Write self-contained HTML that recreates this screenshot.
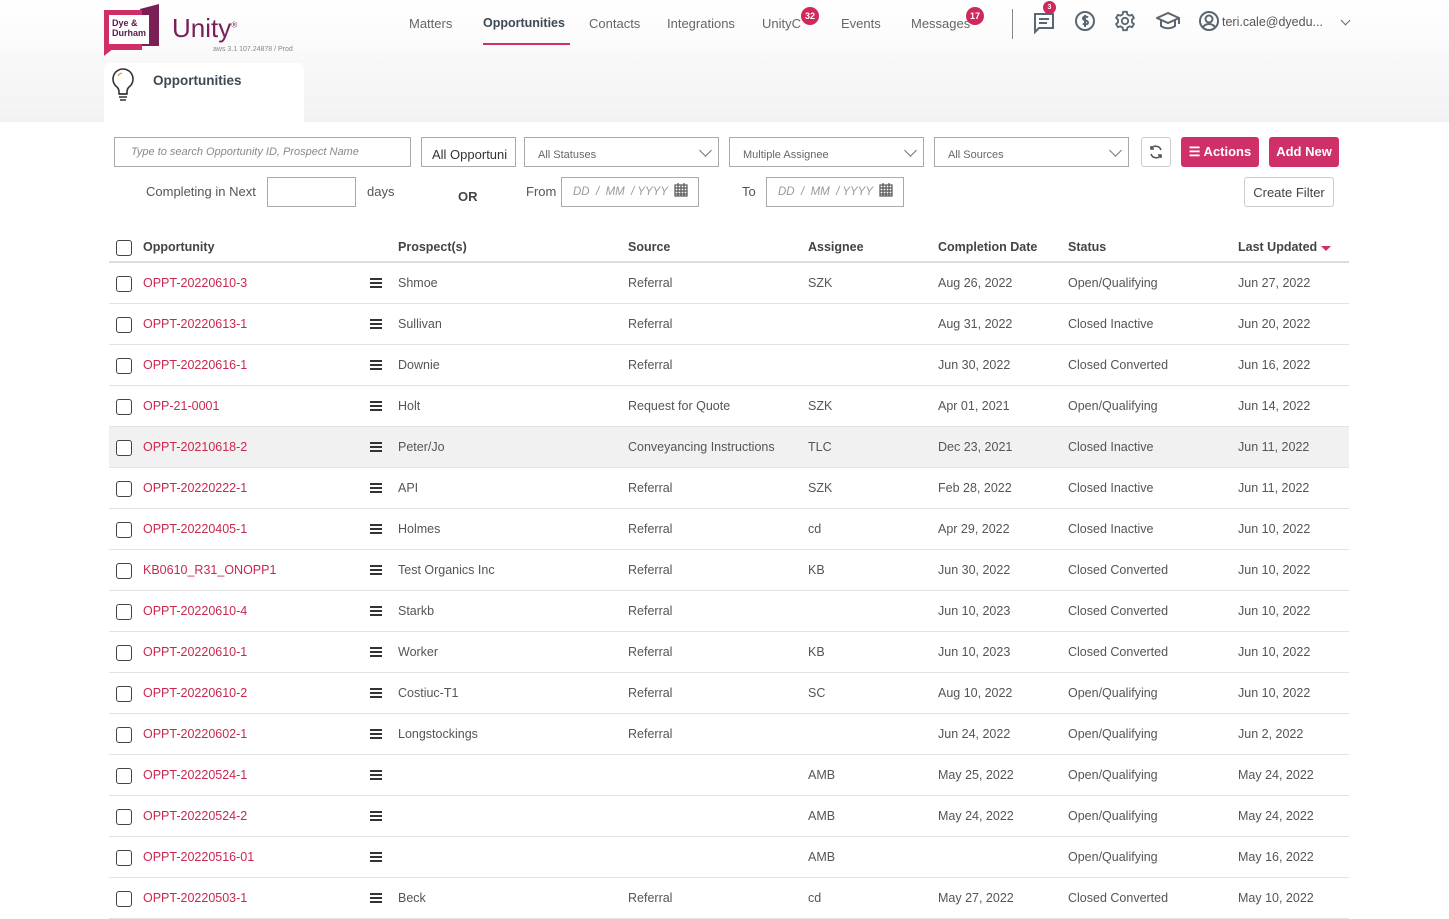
<!DOCTYPE html>
<html><head><meta charset="utf-8">
<style>
*{box-sizing:border-box;margin:0;padding:0}
body{width:1449px;height:906px;overflow:hidden;background:#fff;font-family:"Liberation Sans",sans-serif;color:#555;position:relative}
.a{position:absolute;white-space:nowrap}
.hdr{position:absolute;left:0;top:0;width:1449px;height:122px;background:linear-gradient(#fff,#f2f2f2)}
.nav{font-size:13px;color:#666;top:16px}
.badge{position:absolute;background:#d0285a;color:#fff;border-radius:50%;font-size:9px;font-weight:bold;text-align:center}
.inp{position:absolute;border:1px solid #aaa;background:#fff;height:30px}
.ph{font-size:11px;color:#888;font-style:italic}
.sel{font-size:11px;color:#666}
.chev{position:absolute;right:8px;top:8px;width:9px;height:9px;border-right:1.5px solid #777;border-bottom:1.5px solid #777;transform:rotate(45deg)}
.btn{position:absolute;background:#d0306a;color:#fff;font-weight:bold;font-size:13px;border-radius:3px;height:30px;line-height:30px;text-align:center}
.th{font-size:12.5px;font-weight:bold;color:#444;top:240px}
.cb{position:absolute;left:116px;width:16px;height:16px;border:1.5px solid #444;border-radius:3px;background:#fff}
.row{position:absolute;left:109px;width:1240px;height:41px;border-bottom:1px solid #e3e3e3;font-size:12.5px;color:#555}
.row span{position:absolute;top:13px;white-space:nowrap}
.row .id{left:34px;color:#c9284f}
.ham{position:absolute;left:261px;top:15px;width:12px;height:10px;border-top:2px solid #333;border-bottom:2px solid #333}
.ham:after{content:"";position:absolute;left:0;top:2px;width:12px;height:2px;background:#333}
</style></head><body>
<div class="hdr"></div>
<div class="a" style="left:140px;top:4px;width:19px;height:42px;background:#7b1f57;clip-path:polygon(0 12%,100% 0,100% 100%,0 100%)"></div>
<div class="a" style="left:104px;top:10px;width:38px;height:40px;background:#cf2e67"></div>
<div class="a" style="left:104px;top:48px;width:10px;height:8px;background:#cf2e67;clip-path:polygon(0 0,100% 0,0 100%)"></div>
<div class="a" style="left:109px;top:15px;width:40px;height:29px;background:#fff"></div>
<div class="a" style="left:112px;top:18px;font-size:9px;font-weight:bold;color:#5a1848;line-height:10px">Dye &amp;<br>Durham</div>
<div class="a" style="left:172px;top:13px;font-size:26px;color:#7a1f5c">Unity<sup style="font-size:8px">®</sup></div>
<div class="a" style="left:213px;top:46px;font-size:7px;color:#888">aws 3.1 107.24878 / Prod</div>
<div class="a" style="left:104px;top:63px;width:200px;height:60px;background:#fff;border-radius:6px 6px 0 0"></div>
<svg class="a" style="left:110px;top:67px" width="26" height="36" viewBox="0 0 26 36"><path d="M13 2a10 10 0 0 0-6 18c1.5 1.5 2 3 2 5v2h8v-2c0-2 .5-3.5 2-5A10 10 0 0 0 13 2z" fill="none" stroke="#333" stroke-width="1.6"/><path d="M9 27h8M9 30h8M10 33h6" stroke="#333" stroke-width="1.6"/><path d="M8 9a6 6 0 0 1 4-3" stroke="#e0a030" stroke-width="1.3" fill="none"/></svg>
<div class="a" style="left:153px;top:73px;font-size:13.5px;font-weight:bold;color:#3d4a55">Opportunities</div>
<div class="a nav" style="left:409px">Matters</div>
<div class="a nav" style="left:483px;font-weight:bold;color:#3d4a55;font-size:12.5px">Opportunities</div>
<div class="a" style="left:483px;top:43px;width:87px;height:2px;background:#d0306a"></div>
<div class="a nav" style="left:589px">Contacts</div>
<div class="a nav" style="left:667px">Integrations</div>
<div class="a nav" style="left:762px">UnityC</div>
<div class="badge" style="left:801px;top:7px;width:18px;height:18px;line-height:18px">32</div>
<div class="a nav" style="left:841px">Events</div>
<div class="a nav" style="left:911px">Messages</div>
<div class="badge" style="left:966px;top:7px;width:18px;height:18px;line-height:18px">17</div>
<div class="a" style="left:1012px;top:9px;width:1px;height:30px;background:#888"></div>
<svg class="a" style="left:1033px;top:12px" width="22" height="22" viewBox="0 0 22 22" fill="none" stroke="#5a6670" stroke-width="2"><path d="M2 2h18v14H6l-4 4z"/><path d="M6 7h10M6 11h8" /></svg>
<div class="badge" style="left:1043px;top:1px;width:13px;height:13px;line-height:13px;font-size:7px">3</div>
<svg class="a" style="left:1074px;top:10px" width="22" height="22" viewBox="0 0 22 22" fill="none" stroke="#5a6670" stroke-width="2"><circle cx="11" cy="11" r="9"/><path d="M14 7.5c-1-1-5-1.5-5 1s5 1.5 5 4-4 2-5 1M11 5v12"/></svg>
<svg class="a" style="left:1114px;top:10px" width="22" height="22" viewBox="0 0 24 24" fill="none" stroke="#5a6670" stroke-width="2"><circle cx="12" cy="12" r="3.5"/><path d="M10 2h4l.6 2.8 2.4 1.4 2.7-.9 2 3.4-2.1 1.9v2.8l2.1 1.9-2 3.4-2.7-.9-2.4 1.4L14 22h-4l-.6-2.8-2.4-1.4-2.7.9-2-3.4 2.1-1.9v-2.8L2.3 8.7l2-3.4 2.7.9 2.4-1.4z"/></svg>
<svg class="a" style="left:1156px;top:11px" width="24" height="20" viewBox="0 0 24 20" fill="none" stroke="#5a6670" stroke-width="2"><path d="M12 2 1 7l11 5 11-5z"/><path d="M5 9v6c4 3 10 3 14 0V9M23 7v6"/></svg>
<svg class="a" style="left:1198px;top:10px" width="22" height="22" viewBox="0 0 22 22" fill="none" stroke="#5a6670" stroke-width="2"><circle cx="11" cy="11" r="9"/><circle cx="11" cy="9" r="3.5"/><path d="M5 17c3-4 9-4 12 0"/></svg>
<div class="a nav" style="left:1222px;top:15px;color:#555;font-size:12.5px">teri.cale@dyedu...</div>
<div class="a" style="left:1342px;top:17px;width:7px;height:7px;border-right:1.5px solid #666;border-bottom:1.5px solid #666;transform:rotate(45deg)"></div>
<div class="inp" style="left:114px;top:137px;width:297px"><span class="a ph" style="left:16px;top:8px">Type to search Opportunity ID, Prospect Name</span></div>
<div class="inp" style="left:421px;top:137px;width:95px;overflow:hidden"><span class="a" style="left:10px;top:9px;font-size:13px;color:#333">All Opportuni</span></div>
<div class="inp" style="left:524px;top:137px;width:195px"><span class="a sel" style="left:13px;top:11px">All Statuses</span><div class="chev"></div></div>
<div class="inp" style="left:729px;top:137px;width:195px"><span class="a sel" style="left:13px;top:11px">Multiple Assignee</span><div class="chev"></div></div>
<div class="inp" style="left:934px;top:137px;width:195px"><span class="a sel" style="left:13px;top:11px">All Sources</span><div class="chev"></div></div>
<div class="a" style="left:1141px;top:137px;width:30px;height:30px;border:1px solid #ccc;border-radius:3px;background:#fff"></div>
<svg class="a" style="left:1148px;top:144px" width="16" height="16" viewBox="0 0 16 16" fill="none" stroke="#555" stroke-width="1.6"><path d="M13 6A5.5 5.5 0 0 0 3 5M3 10a5.5 5.5 0 0 0 10 1"/><path d="M3 2v3h3M13 14v-3h-3"/></svg>
<div class="btn" style="left:1181px;top:137px;width:78px">☰ Actions</div>
<div class="btn" style="left:1269px;top:137px;width:70px">Add New</div>
<div class="a" style="left:146px;top:184px;font-size:13px">Completing in Next</div>
<div class="inp" style="left:267px;top:177px;width:89px;height:30px"></div>
<div class="a" style="left:367px;top:184px;font-size:13px">days</div>
<div class="a" style="left:458px;top:189px;font-size:13px;font-weight:bold;color:#444">OR</div>
<div class="a" style="left:526px;top:184px;font-size:13px">From</div>
<div class="inp" style="left:561px;top:177px;width:138px"><span class="a ph" style="left:11px;top:8px;font-size:11.5px;color:#999">DD &nbsp;/ &nbsp;MM &nbsp;/ YYYY</span></div>
<div class="a" style="left:742px;top:184px;font-size:13px">To</div>
<div class="inp" style="left:766px;top:177px;width:138px"><span class="a ph" style="left:11px;top:8px;font-size:11.5px;color:#999">DD &nbsp;/ &nbsp;MM &nbsp;/ YYYY</span></div>
<svg class="a" style="left:674px;top:183px" width="14" height="14" viewBox="0 0 14 14" fill="none" stroke="#555" stroke-width="1.2"><rect x="1" y="2" width="12" height="11"/><path d="M1 5h12M1 8h12M1 11h12M4 2v11M7 2v11M10 2v11M4 0v3M10 0v3"/></svg>
<svg class="a" style="left:879px;top:183px" width="14" height="14" viewBox="0 0 14 14" fill="none" stroke="#555" stroke-width="1.2"><rect x="1" y="2" width="12" height="11"/><path d="M1 5h12M1 8h12M1 11h12M4 2v11M7 2v11M10 2v11M4 0v3M10 0v3"/></svg>
<div class="a" style="left:1244px;top:177px;width:90px;height:30px;border:1px solid #ccc;border-radius:3px;font-size:13px;color:#444;text-align:center;line-height:30px">Create Filter</div>
<div class="cb" style="top:240px"></div>
<div class="a th" style="left:143px">Opportunity</div>
<div class="a th" style="left:398px">Prospect(s)</div>
<div class="a th" style="left:628px">Source</div>
<div class="a th" style="left:808px">Assignee</div>
<div class="a th" style="left:938px">Completion Date</div>
<div class="a th" style="left:1068px">Status</div>
<div class="a th" style="left:1238px">Last Updated</div>
<div class="a" style="left:1321px;top:246px;border-left:5px solid transparent;border-right:5px solid transparent;border-top:5px solid #d0306a"></div>
<div class="a" style="left:109px;top:261px;width:1240px;height:2px;background:#ddd"></div>
<div id="rows"></div>
<script>
var d=[["OPPT-20220610-3","Shmoe","Referral","SZK","Aug 26, 2022","Open/Qualifying","Jun 27, 2022"],
["OPPT-20220613-1","Sullivan","Referral","","Aug 31, 2022","Closed Inactive","Jun 20, 2022"],
["OPPT-20220616-1","Downie","Referral","","Jun 30, 2022","Closed Converted","Jun 16, 2022"],
["OPP-21-0001","Holt","Request for Quote","SZK","Apr 01, 2021","Open/Qualifying","Jun 14, 2022"],
["OPPT-20210618-2","Peter/Jo","Conveyancing Instructions","TLC","Dec 23, 2021","Closed Inactive","Jun 11, 2022"],
["OPPT-20220222-1","API","Referral","SZK","Feb 28, 2022","Closed Inactive","Jun 11, 2022"],
["OPPT-20220405-1","Holmes","Referral","cd","Apr 29, 2022","Closed Inactive","Jun 10, 2022"],
["KB0610_R31_ONOPP1","Test Organics Inc","Referral","KB","Jun 30, 2022","Closed Converted","Jun 10, 2022"],
["OPPT-20220610-4","Starkb","Referral","","Jun 10, 2023","Closed Converted","Jun 10, 2022"],
["OPPT-20220610-1","Worker","Referral","KB","Jun 10, 2023","Closed Converted","Jun 10, 2022"],
["OPPT-20220610-2","Costiuc-T1","Referral","SC","Aug 10, 2022","Open/Qualifying","Jun 10, 2022"],
["OPPT-20220602-1","Longstockings","Referral","","Jun 24, 2022","Open/Qualifying","Jun 2, 2022"],
["OPPT-20220524-1","","","AMB","May 25, 2022","Open/Qualifying","May 24, 2022"],
["OPPT-20220524-2","","","AMB","May 24, 2022","Open/Qualifying","May 24, 2022"],
["OPPT-20220516-01","","","AMB","","Open/Qualifying","May 16, 2022"],
["OPPT-20220503-1","Beck","Referral","cd","May 27, 2022","Closed Converted","May 10, 2022"]];
var h="",xs=[289,519,699,829,959,1129];
d.forEach(function(r,i){var t=263+i*41;
h+='<div class="row" style="top:'+t+'px;'+(i==4?'background:#f1f1f1':'')+'"><div class="cb" style="left:7px;top:13px"></div><span class="id">'+r[0]+'</span><div class="ham"></div>';
for(var j=1;j<7;j++)h+='<span style="left:'+xs[j-1]+'px">'+r[j]+'</span>';
h+='</div>';});
document.getElementById("rows").innerHTML=h;
</script>
</body></html>
